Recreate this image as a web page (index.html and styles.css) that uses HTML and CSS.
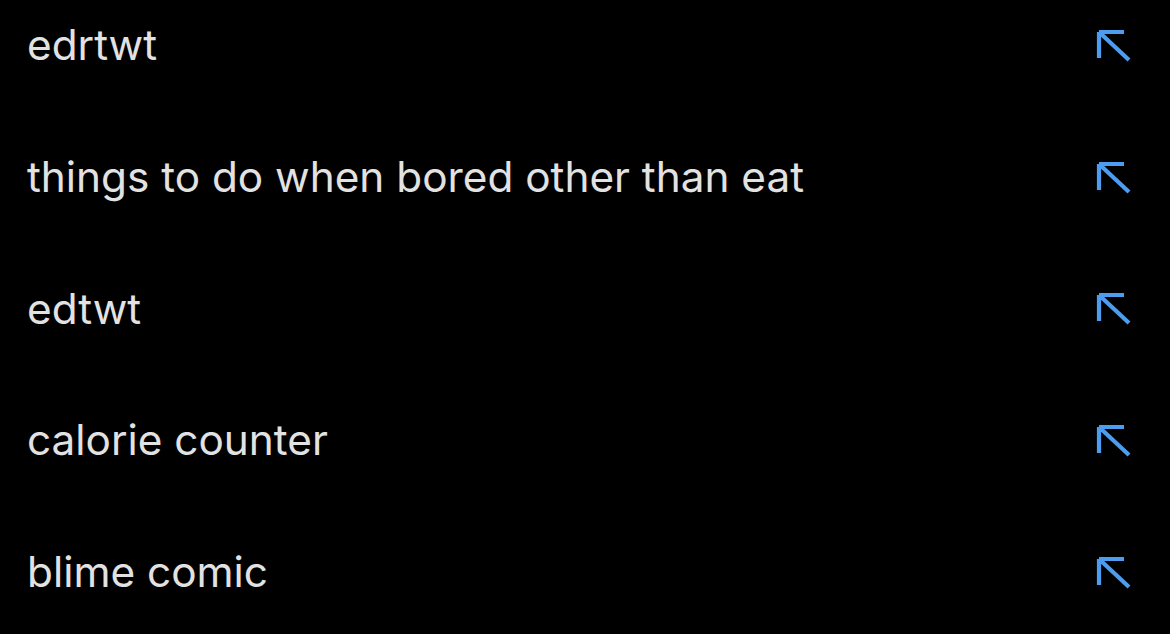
FILE: index.html
```html
<!DOCTYPE html>
<html>
<head>
<meta charset="utf-8">
<link rel="stylesheet" href="styles.css">
</head>
<body>
<ul class="list">
  <li class="row"><span class="label">edrtwt</span><svg class="arrow" viewBox="0 0 36 34"><path d="M4 4 H29 M4 4 V30 M4 4 L34 32" /></svg></li>
  <li class="row"><span class="label">things to do when bored other than eat</span><svg class="arrow" viewBox="0 0 36 34"><path d="M4 4 H29 M4 4 V30 M4 4 L34 32" /></svg></li>
  <li class="row"><span class="label">edtwt</span><svg class="arrow" viewBox="0 0 36 34"><path d="M4 4 H29 M4 4 V30 M4 4 L34 32" /></svg></li>
  <li class="row"><span class="label">calorie counter</span><svg class="arrow" viewBox="0 0 36 34"><path d="M4 4 H29 M4 4 V30 M4 4 L34 32" /></svg></li>
  <li class="row"><span class="label">blime comic</span><svg class="arrow" viewBox="0 0 36 34"><path d="M4 4 H29 M4 4 V30 M4 4 L34 32" /></svg></li>
</ul>
</body>
</html>
```
FILE: styles.css
```css
html, body {
  margin: 0;
  padding: 0;
  background: #000;
  height: 100%;
  overflow: hidden;
}
.list {
  list-style: none;
  margin: -21px 0 0 0;
  padding: 0 39px 0 27px;
}
.row {
  height: 131.7px;
  display: flex;
  align-items: center;
  justify-content: space-between;
}
.label {
  font-family: Inter, "Noto Sans", sans-serif;
  font-size: 42.3px;
  font-weight: 400;
  color: #e2e2e2;
  letter-spacing: 0;
}
.arrow {
  width: 36px;
  height: 34px;
  fill: none;
  stroke: #4c9df0;
  stroke-width: 4.2;
  stroke-linecap: butt;
}
```
